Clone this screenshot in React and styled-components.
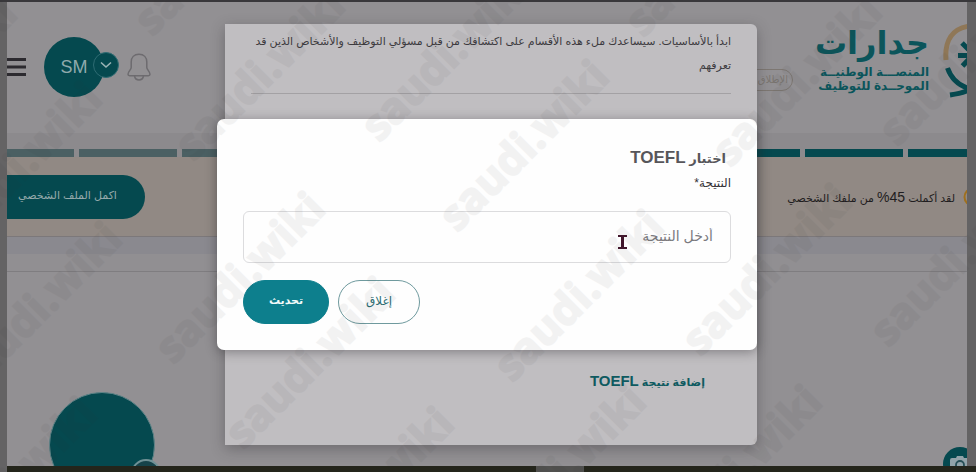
import React from "react";
import styled, { createGlobalStyle } from "styled-components";

const c = {
  page: "#929093",
  side: "#646364",
  teal: "#05494f",
  tealBright: "#0d7f8d",
  card: "#c0bec1",
};

const GlobalStyle = createGlobalStyle`
  *, *::before, *::after { box-sizing: border-box; }
  body {
    margin: 0;
    background: ${c.side};
    font-family: "Liberation Sans", "DejaVu Sans", sans-serif;
  }
  button, input { font-family: inherit; }
  p, h1, h2 { margin: 0; }
`;

const Screen = styled.div`
  position: relative;
  display: grid;
  grid-template-rows: 2px minmax(0, 1fr) 6px;
  height: 100vh;
  overflow: hidden;
`;

const TopEdge = styled.div`
  background: #39383b;
`;

const BottomEdge = styled.div`
  display: flex;
  justify-content: center;
  margin-left: 7px;
  padding-left: 137px;
  background: #24251b;
`;

const EdgeHandle = styled.div`
  width: 48px;
  background: #51514f;
`;

const Viewport = styled.div`
  display: flex;
  flex-direction: column;
  margin: 0 9px 0 7px;
  overflow: hidden;
  background: ${c.page};
`;

const Header = styled.header`
  display: flex;
  flex: none;
  justify-content: space-between;
  align-items: flex-start;
  height: 131px;
`;

const UserTools = styled.div`
  display: flex;
  align-items: center;
  padding-top: 35px;
`;

const IconButton = styled.button`
  display: flex;
  padding: 0;
  border: 0;
  background: none;
`;

const Avatar = styled.span`
  display: flex;
  align-items: center;
  justify-content: center;
  width: 60px;
  height: 60px;
  margin-left: 18px;
  border-radius: 50%;
  background: ${c.teal};
  color: #8fa9ac;
  font-size: 18px;
`;

const AvatarToggle = styled(IconButton)`
  align-items: center;
  justify-content: center;
  width: 26px;
  height: 26px;
  margin: 0 8px 4px -11px;
  border: 1px solid #2f6c73;
  border-radius: 50%;
  background: ${c.teal};
`;

const Brand = styled.div`
  display: flex;
  direction: rtl;
  align-items: flex-start;
  gap: 14px;
  padding-top: 20px;
  margin-right: -22px;
`;

const BrandText = styled.div`
  display: flex;
  flex-direction: column;
  color: #0b555b;
  font-weight: 700;
  text-align: right;
  white-space: nowrap;
`;

const BrandName = styled.h1`
  font-size: 32px;
  line-height: 43px;
`;

const BrandTag = styled.p`
  font-size: 12px;
  line-height: 14px;
`;

const LaunchBadge = styled.span`
  width: 96px;
  height: 22px;
  margin: 47px 8px 0 0;
  padding: 0 4px;
  border: 1px solid #7d7772;
  border-radius: 11px;
  color: #7b7671;
  font-size: 10px;
  line-height: 19px;
  white-space: nowrap;
`;

const Steps = styled.div`
  display: grid;
  flex: none;
  grid-template-columns: repeat(10, 1fr);
  gap: 5px;
  margin: 0 -40px 0 -32px;
  padding-top: 16px;
  background: #8c8a8d;
`;

const Step = styled.span`
  height: 8px;
  background: ${(p) => (p.$done ? c.teal : "#4b6063")};
`;

const Notice = styled.section`
  display: flex;
  direction: rtl;
  flex: none;
  align-items: center;
  justify-content: space-between;
  height: 80px;
  margin-right: -16px;
  border-bottom: 1px solid #7c787a;
  background: #918984;
`;

const NoticeText = styled.p`
  display: flex;
  align-items: center;
  gap: 8px;
  color: #1f1d20;
  font-size: 11px;
`;

const CompleteButton = styled.button`
  height: 44px;
  margin-left: -21px;
  padding: 0 28px 2px 32px;
  border: 0;
  border-radius: 22px;
  background: ${c.teal};
  color: #95a9ab;
  font-size: 11px;
  white-space: nowrap;
`;

const Band = styled.div`
  flex: none;
  height: 35px;
  border-bottom: 1px solid #7f7d80;
  background: linear-gradient(#8a898f 0 17px, #918f92 17px);
`;

const Profile = styled.main`
  display: flex;
  justify-content: space-between;
  align-items: flex-start;
  margin-right: -10px;
  padding: 120px 0 0 42px;
`;

const ProfilePhoto = styled.div`
  display: flex;
  flex: none;
  align-items: flex-end;
  justify-content: flex-end;
  width: 106px;
  height: 106px;
  border: 1px solid #5f8488;
  border-radius: 50%;
  background: ${c.teal};
`;

const PhotoBadge = styled.span`
  width: 30px;
  height: 30px;
  margin-right: -7px;
  margin-bottom: 8px;
  border: 2px solid #6f9195;
  border-radius: 50%;
  background: #164349;
`;

const CameraButton = styled(IconButton)`
  align-items: center;
  justify-content: center;
  width: 34px;
  height: 34px;
  margin-top: 55px;
  border-radius: 50%;
  background: ${c.teal};
`;

const Layer = styled.div`
  position: absolute;
  inset: 0 9px 0 7px;
  display: flex;
  justify-content: center;
  align-items: flex-start;
  direction: rtl;
`;

const SectionCard = styled.section`
  display: flex;
  flex-direction: column;
  justify-content: space-between;
  width: 532px;
  min-height: 421px;
  margin: 24px 0 0 8px;
  padding: 5px 26px 52px;
  border-radius: 0 6px 6px 0;
  background: ${c.card};
  box-shadow: 0 4px 14px rgba(40, 38, 42, 0.35);
`;

const Intro = styled.p`
  padding-bottom: 16px;
  border-bottom: 1px solid #a3a1a4;
  color: #3c3a3e;
  font-size: 11px;
  line-height: 24px;
`;

const AddLink = styled.a`
  align-self: flex-start;
  margin-right: 26px;
  color: #0e5a60;
  font-size: 11px;
  font-weight: 700;
  line-height: 22px;
  text-decoration: none;
`;

const Latin = styled.bdi`
  font-size: ${(p) => p.$size}px;
`;

const Dialog = styled.form`
  display: flex;
  flex-direction: column;
  width: 540px;
  margin-top: 119px;
  padding: 27px 26px 26px;
  border-radius: 7px;
  background: #fefefe;
  box-shadow: 0 2px 12px rgba(30, 28, 32, 0.4);
`;

const DialogTitle = styled.h2`
  padding-right: 5px;
  color: #57565a;
  font-size: 13px;
  line-height: 24px;
`;

const FieldLabel = styled.label`
  color: #333135;
  font-size: 12px;
  line-height: 24px;
`;

const Field = styled.input`
  height: 52px;
  margin-top: 16px;
  padding: 0 17px 2px;
  border: 1px solid #dcdcde;
  border-radius: 6px;
  background: transparent;
  font-size: 14px;
  outline: 0;
  &::placeholder { color: #7b7a7e; opacity: 1; }
`;

const Actions = styled.div`
  display: flex;
  justify-content: flex-end;
  gap: 9px;
  margin-top: 17px;
`;

const Action = styled.button`
  width: ${(p) => (p.$primary ? 86 : 82)}px;
  height: 44px;
  padding: 0 0 3px;
  border: 1px solid ${(p) => (p.$primary ? c.tealBright : "#6f9a9e")};
  border-radius: 22px;
  background: ${(p) => (p.$primary ? c.tealBright : "transparent")};
  color: ${(p) => (p.$primary ? "#f2fafa" : "#2a6d74")};
  font-size: ${(p) => (p.$primary ? 11 : 12)}px;
  font-weight: ${(p) => (p.$primary ? 700 : 400)};
`;

const Pointer = styled.svg`
  position: absolute;
  left: 617px;
  top: 234px;
`;

const Watermarks = styled.div`
  position: absolute;
  inset: 0;
  overflow: hidden;
  opacity: 0.05;
  pointer-events: none;
`;

const Mark = styled.span`
  position: absolute;
  left: ${(p) => p.$x - 9}px;
  top: ${(p) => p.$y - 35}px;
  color: #333;
  font: 700 43px/56px "Open Sans", sans-serif;
  -webkit-text-stroke: 2px #333;
  transform: rotate(-45deg);
  transform-origin: 12px 36px;
`;

const marks = [
  [152, 22], [379, 128], [643, 23], [193, 147], [730, 153], [897, 132],
  [457, 218], [512, 368], [700, 342], [888, 333], [173, 350], [243, 435],
  [-50, 240], [-30, 380], [-55, 555], [302, 565], [494, 543], [670, 543],
  [-135, 155],
];

const MenuIcon = () => (
  <svg width="19" height="20" viewBox="0 0 19 20" stroke="#2c2a2f" strokeWidth="3">
    <path d="M0 2.5H19M0 10H19M0 17.5H19" />
  </svg>
);

const ChevronIcon = () => (
  <svg width="12" height="8" viewBox="0 0 12 8" fill="none" stroke="#9ab4b6" strokeWidth="1.6">
    <path d="M1 1.5L6 6L11 1.5" />
  </svg>
);

const BellIcon = () => (
  <svg width="24" height="28" viewBox="0 0 24 28" fill="none" stroke="#6d6b6f" strokeWidth="1.5">
    <path d="M12 1.2C7 1.2 4.2 4.6 4.2 9V14.5C4.2 16.5 1 18.5 1 21.3C1 22.3 1.6 22.7 2.6 22.7H21.4C22.4 22.7 23 22.3 23 21.3C23 18.5 19.8 16.5 19.8 14.5V9C19.8 4.6 17 1.2 12 1.2Z" />
    <path d="M7.5 23C8 25.6 9.7 26.9 12 26.9C14.3 26.9 16 25.6 16.5 23" />
  </svg>
);

const BrandMark = () => (
  <svg width="46" height="78" viewBox="0 0 46 78" fill="none">
    <path d="M3 38C1.500 19 9 6 27 4" stroke="#8f7757" strokeWidth="5" />
    <path d="M15 33.500H27M19 21L28 30M19.500 44L28 35" stroke={c.teal} strokeWidth="5" />
    <path d="M4.500 46C8 56 15 64 28 67" stroke={c.teal} strokeWidth="5" />
    <path d="M7 73C14 72 21 71 28 67" stroke={c.teal} strokeWidth="5" />
  </svg>
);

const AlertIcon = () => (
  <svg width="20" height="20" viewBox="0 0 20 20" fill="none" stroke="#a0701c" strokeWidth="2">
    <circle cx="10" cy="10" r="8.500" />
    <path d="M10 5V11M10 13V15" />
  </svg>
);

const CameraIcon = () => (
  <svg width="20" height="16" viewBox="0 0 20 16">
    <path d="M2 2H6L7 0H13L14 2H18Q20 2 20 4V14Q20 16 18 16H2Q0 16 0 14V4Q0 2 2 2Z" fill="#91a3a9" />
    <circle cx="10" cy="9" r="4" fill="#91a3a9" stroke="#264f56" strokeWidth="1.800" />
  </svg>
);

export default function App() {
  return (
    <>
      <GlobalStyle />
      <Screen>
        <TopEdge />
        <Viewport>
          <Header>
            <UserTools>
              <IconButton aria-label="القائمة"><MenuIcon /></IconButton>
              <Avatar>SM</Avatar>
              <AvatarToggle aria-label="الحساب"><ChevronIcon /></AvatarToggle>
              <IconButton aria-label="الإشعارات"><BellIcon /></IconButton>
            </UserTools>
            <Brand>
              <BrandMark />
              <BrandText>
                <BrandName>جدارات</BrandName>
                <BrandTag>المنصـــة الوطنيــة</BrandTag>
                <BrandTag>الموحــدة للتوظيف</BrandTag>
              </BrandText>
              <LaunchBadge>الإطلاق التجريبي</LaunchBadge>
            </Brand>
          </Header>
          <Steps>
            {Array.from({ length: 10 }, (_, i) => <Step key={i} $done={i > 5} />)}
          </Steps>
          <Notice>
            <NoticeText>
              <AlertIcon />
              <span>لقد أكملت <Latin dir="ltr" $size={14}>%45</Latin> من ملفك الشخصي</span>
            </NoticeText>
            <CompleteButton>اكمل الملف الشخصي</CompleteButton>
          </Notice>
          <Band />
          <Profile>
            <ProfilePhoto><PhotoBadge /></ProfilePhoto>
            <CameraButton aria-label="تغيير الصورة"><CameraIcon /></CameraButton>
          </Profile>
        </Viewport>
        <BottomEdge><EdgeHandle /></BottomEdge>

        <Layer>
          <SectionCard>
            <Intro>
              ابدأ بالأساسيات. سيساعدك ملء هذه الأقسام على اكتشافك من قبل مسؤلي التوظيف والأشخاص الذين قد تعرفهم
            </Intro>
            <AddLink href="#toefl">إضافة نتيجة <Latin $size={15}>TOEFL</Latin></AddLink>
          </SectionCard>
        </Layer>

        <Layer>
          <Dialog role="dialog" aria-labelledby="toefl-title" onSubmit={(e) => e.preventDefault()}>
            <DialogTitle id="toefl-title">اختبار <Latin $size={17}>TOEFL</Latin></DialogTitle>
            <FieldLabel htmlFor="score">النتيجة*</FieldLabel>
            <Field id="score" placeholder="أدخل النتيجة" />
            <Actions>
              <Action type="button">إغلاق</Action>
              <Action type="submit" $primary>تحديث</Action>
            </Actions>
          </Dialog>
        </Layer>

        <Pointer width="11" height="16" viewBox="0 0 11 16" fill="none" stroke="#42162c" strokeWidth="2" aria-hidden="true">
          <path d="M1 2H10M1 14H10" />
          <path d="M5.500 2V14" strokeWidth="3" />
        </Pointer>

        <Watermarks aria-hidden="true">
          {marks.map(([x, y]) => <Mark key={`${x},${y}`} $x={x} $y={y}>saudi.wiki</Mark>)}
        </Watermarks>
      </Screen>
    </>
  );
}
